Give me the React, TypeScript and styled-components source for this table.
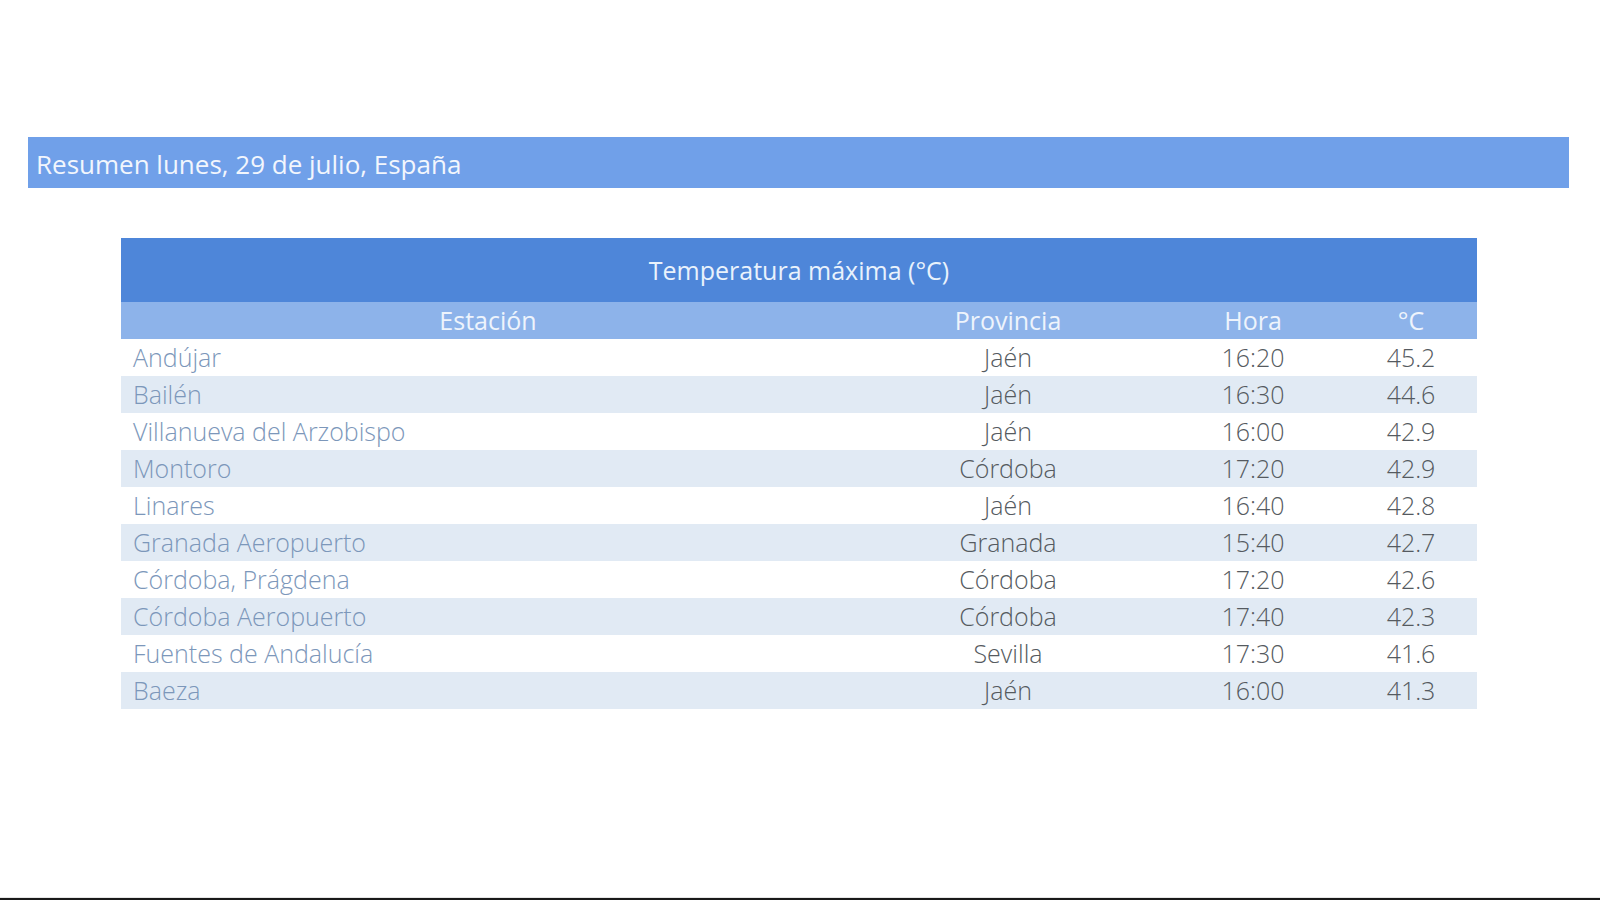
import React from 'react';
import styled, {createGlobalStyle} from 'styled-components';

type Row = {
    station: string;
    province: string;
    time: string;
    temp: string;
};

const rows: Row[] = [
    {station: 'Andújar', province: 'Jaén', time: '16:20', temp: '45.2'},
    {station: 'Bailén', province: 'Jaén', time: '16:30', temp: '44.6'},
    {station: 'Villanueva del Arzobispo', province: 'Jaén', time: '16:00', temp: '42.9'},
    {station: 'Montoro', province: 'Córdoba', time: '17:20', temp: '42.9'},
    {station: 'Linares', province: 'Jaén', time: '16:40', temp: '42.8'},
    {station: 'Granada Aeropuerto', province: 'Granada', time: '15:40', temp: '42.7'},
    {station: 'Córdoba, Prágdena', province: 'Córdoba', time: '17:20', temp: '42.6'},
    {station: 'Córdoba Aeropuerto', province: 'Córdoba', time: '17:40', temp: '42.3'},
    {station: 'Fuentes de Andalucía', province: 'Sevilla', time: '17:30', temp: '41.6'},
    {station: 'Baeza', province: 'Jaén', time: '16:00', temp: '41.3'},
];

const App = () => {

    return (
        <>
            <GlobalStyle/>
            <Page>
                <Summary>Resumen lunes, 29 de julio, España</Summary>

                <TableWrap>
                    <Table>
                        <colgroup>
                            <col style={{width: 734}}/>
                            <col style={{width: 306}}/>
                            <col style={{width: 184}}/>
                            <col style={{width: 132}}/>
                        </colgroup>
                        <thead>
                            <tr>
                                <TitleCell colSpan={4}>Temperatura máxima (°C)</TitleCell>
                            </tr>
                            <tr>
                                <HeadCell>Estación</HeadCell>
                                <HeadCell>Provincia</HeadCell>
                                <HeadCell>Hora</HeadCell>
                                <HeadCell>°C</HeadCell>
                            </tr>
                        </thead>
                        <tbody>
                            {rows.map((row, i) => (
                                <BodyRow key={row.station} $striped={i % 2 === 1}>
                                    <StationCell>{row.station}</StationCell>
                                    <Cell>{row.province}</Cell>
                                    <Cell>{row.time}</Cell>
                                    <Cell>{row.temp}</Cell>
                                </BodyRow>
                            ))}
                        </tbody>
                    </Table>
                </TableWrap>

                <BottomRule/>
            </Page>
        </>
    );
}


export default App;

const GlobalStyle = createGlobalStyle`
  html, body {
    margin: 0;
    padding: 0;
    background: #fff;
  }

  body {
    font-family: "Open Sans", "Liberation Sans", sans-serif;
  }
`;

const BottomRule = styled.div`
  margin-top: auto;
  height: 2px;
  background: #1a1a1a;
  border-top: 1px solid #e6e6e6;
`;

const Cell = styled.td`
  text-align: center;
  color: #555a60;
  font-size: 25px;
  font-weight: 300;
  padding: 0;
`;

const StationCell = styled.td`
  text-align: left;
  color: #7c97ba;
  font-size: 25px;
  font-weight: 300;
  padding: 0 0 0 12px;
`;

const BodyRow = styled.tr<{ $striped: boolean }>`
  height: 37px;
  background: ${p => p.$striped ? '#e1eaf4' : '#fff'};
`;

const HeadCell = styled.th`
  height: 37px;
  padding: 0;
  background: #8db3ea;
  color: #eef4fc;
  font-size: 25px;
  font-weight: 400;
  text-align: center;
`;

const TitleCell = styled.th`
  height: 64px;
  padding: 0;
  background: #4e86d9;
  color: #e9f2fc;
  font-size: 25px;
  font-weight: 400;
  text-align: center;
`;

const Table = styled.table`
  width: 1356px;
  border-collapse: collapse;
  table-layout: fixed;
  line-height: 1;
`;

const TableWrap = styled.div`
  padding: 50px 123px 0 121px;
`;

const Summary = styled.div`
  height: 51px;
  margin: 0 31px 0 28px;
  padding: 2px 0 0 8px;
  box-sizing: border-box;
  display: flex;
  align-items: center;
  background: #70a0e9;
  color: #f2f6fd;
  font-size: 26px;
  font-weight: 400;
`;

const Page = styled.div`
  min-height: 100vh;
  box-sizing: border-box;
  padding-top: 137px;
  display: flex;
  flex-direction: column;
`;
